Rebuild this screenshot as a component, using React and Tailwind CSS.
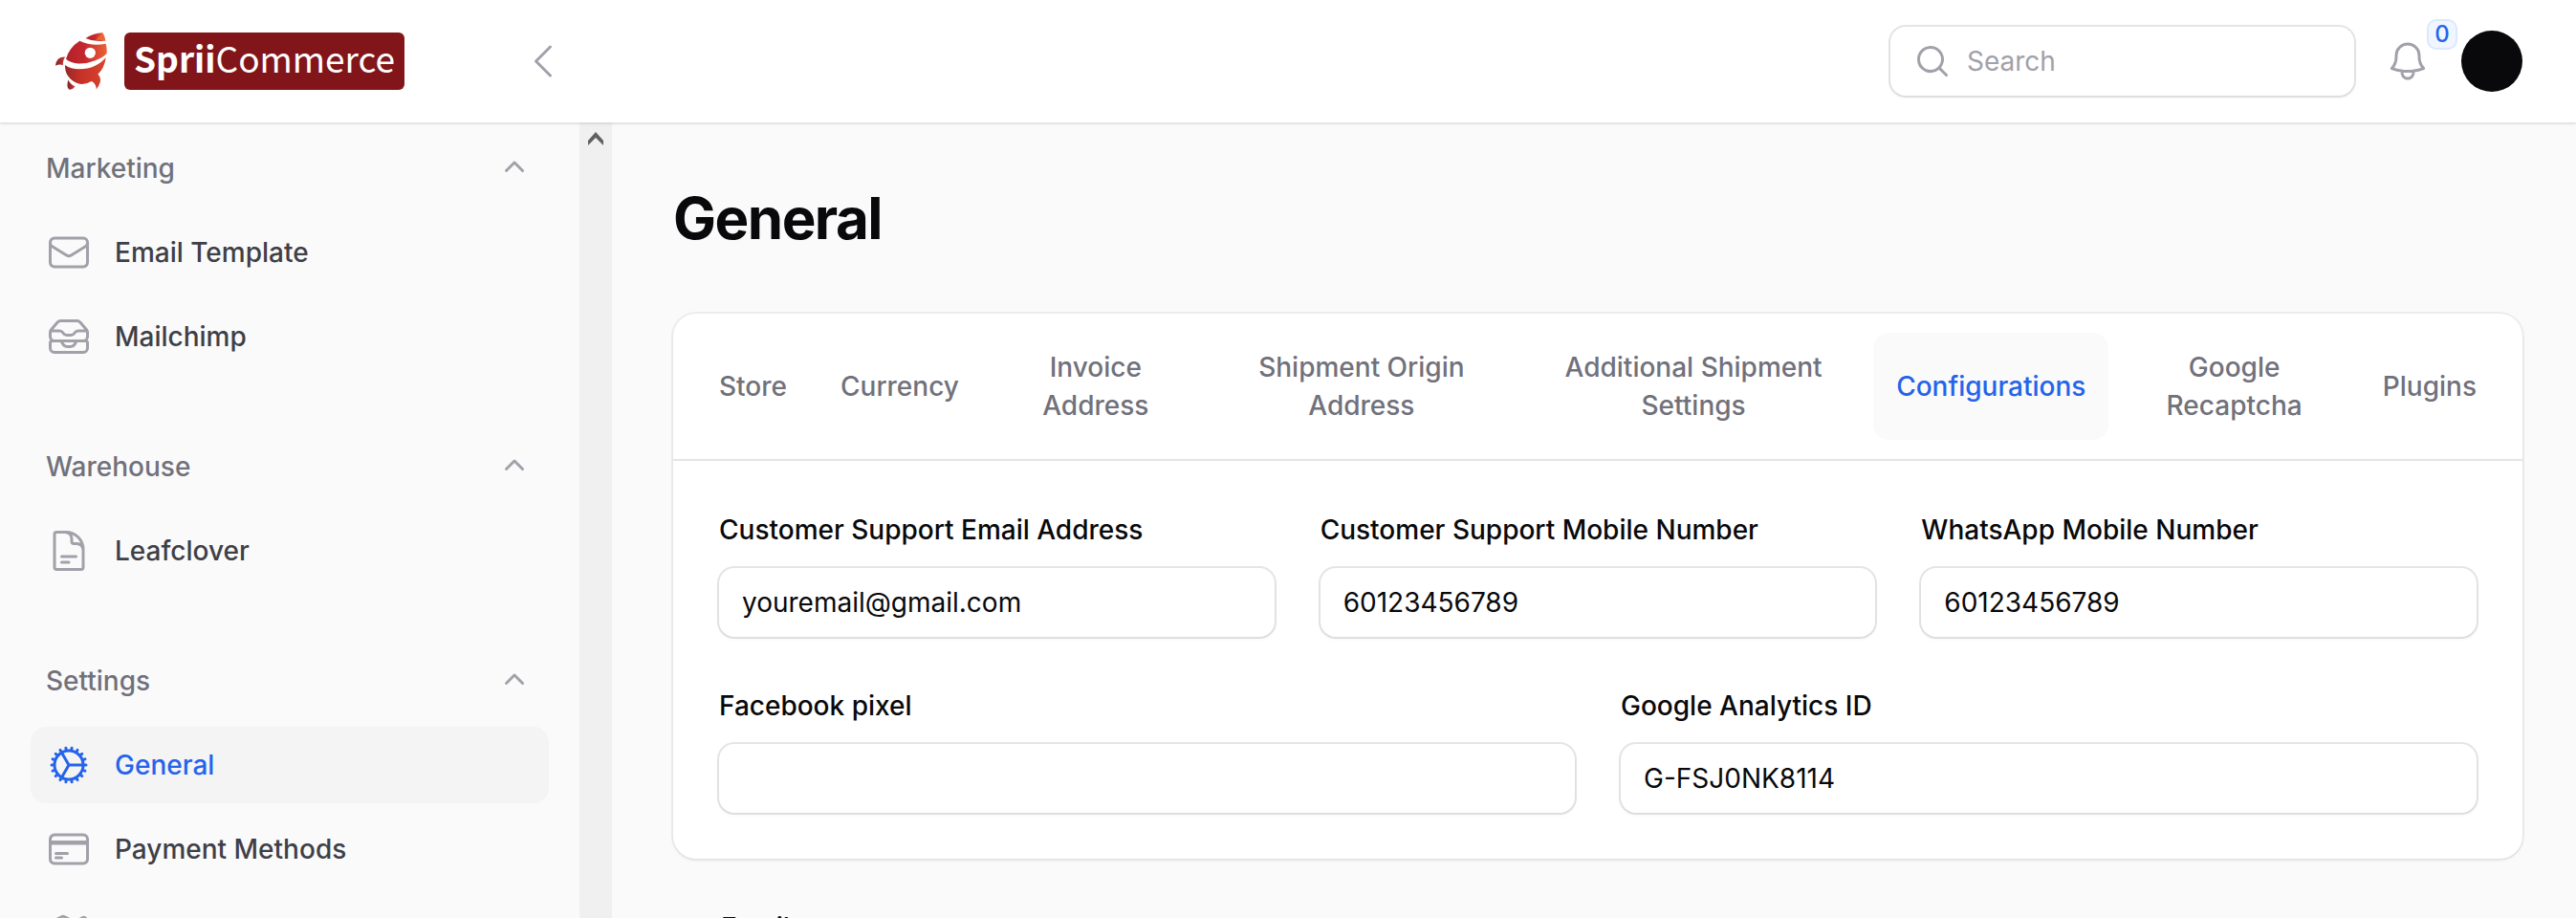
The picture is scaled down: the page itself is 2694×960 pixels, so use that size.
import { useState } from 'react';
import {
  HiMiniChevronUp,
  HiMiniMagnifyingGlass,
  HiOutlineBell,
  HiOutlineChevronLeft,
  HiOutlineCog,
  HiOutlineCreditCard,
  HiOutlineDocumentText,
  HiOutlineEnvelope,
  HiOutlineInboxStack,
  HiOutlineMap,
} from 'react-icons/hi2';

const NAVIGATION = [
  {
    label: 'Marketing',
    items: [
      { id: 'email-template', label: 'Email Template', icon: HiOutlineEnvelope },
      { id: 'mailchimp', label: 'Mailchimp', icon: HiOutlineInboxStack },
    ],
  },
  {
    label: 'Warehouse',
    items: [{ id: 'leafclover', label: 'Leafclover', icon: HiOutlineDocumentText }],
  },
  {
    label: 'Settings',
    items: [
      { id: 'general', label: 'General', icon: HiOutlineCog, active: true },
      { id: 'payment-methods', label: 'Payment Methods', icon: HiOutlineCreditCard },
      { id: 'map', icon: HiOutlineMap },
    ],
  },
];

const TABS = [
  'Store',
  'Currency',
  'Invoice Address',
  'Shipment Origin Address',
  'Additional Shipment Settings',
  'Configurations',
  'Google Recaptcha',
  'Plugins',
];

const FIELDS = [
  { id: 'support-email', label: 'Customer Support Email Address', value: 'youremail@gmail.com', span: 'col-span-2' },
  { id: 'support-mobile', label: 'Customer Support Mobile Number', value: '60123456789', span: 'col-span-2' },
  { id: 'whatsapp', label: 'WhatsApp Mobile Number', value: '60123456789', span: 'col-span-2' },
  { id: 'facebook-pixel', label: 'Facebook pixel', value: '', span: 'col-span-3' },
  { id: 'analytics-id', label: 'Google Analytics ID', value: 'G-FSJ0NK8114', span: 'col-span-3' },
];

function Rocket() {
  return (
    <svg viewBox="0 0 54 60" className="h-[60px] w-[54px]" aria-hidden="true">
      <defs>
        <linearGradient id="hull" x1="0" y1="0" x2="1" y2="0">
          <stop offset="0" stopColor="#b3202c" />
          <stop offset="0.45" stopColor="#c4282e" />
          <stop offset="1" stopColor="#ec6238" />
        </linearGradient>
        <linearGradient id="base" x1="0" y1="0" x2="1" y2="0">
          <stop offset="0" stopColor="#94282a" />
          <stop offset="0.35" stopColor="#c43026" />
          <stop offset="1" stopColor="#d9452f" />
        </linearGradient>
        <linearGradient id="fin" x1="0" y1="0" x2="1" y2="0">
          <stop offset="0" stopColor="#7c2228" />
          <stop offset="1" stopColor="#cf3a32" />
        </linearGradient>
      </defs>
      <path d="M31.500 6 Q39 1 49.300 0.300 Q51.500 4 52.300 8.500 Q41 10.500 31.500 6Z" fill="url(#hull)" />
      <path d="M42 7.500 L49.300 0.300 Q51.500 4 52.300 8.500Z" fill="#f06a3c" opacity="0.8" />
      <path
        d="M25.300 8.700 Q38 15 52.700 11.700 Q54.200 17 53.500 22 Q50 26 41 29.500 Q33 32.800 24 32.500 Q16 32 11 27.700 Q14 16 25.300 8.700Z"
        fill="url(#hull)"
      />
      <circle cx="36.300" cy="21.300" r="5.600" fill="#fff" />
      <path
        d="M10 34 Q16 38.300 25 38.300 Q34 38.300 41 35 Q49 31 52.700 26 Q51.500 37 44.500 43.500 Q48 48 46.700 52 Q45.500 56 42.700 59.500 Q42.500 53 37.700 51 Q30 55.500 22.700 53 Q9.500 47 10 34Z"
        fill="url(#base)"
      />
      <path d="M0 34.700 Q1 25 10.300 25.500 Q7.500 29 8 34 Q4 32.500 0 34.700Z" fill="url(#fin)" />
      <path d="M13.300 49.500 Q16 54.500 20.500 56.500 Q18 60 14.500 59.800 Q11 58 13.300 49.500Z" fill="url(#fin)" />
    </svg>
  );
}

function Logo() {
  return (
    <a href="#home" className="flex items-center gap-[18px]">
      <Rocket />
      <span className="flex h-[60px] items-center rounded-md bg-[#82151a] px-[10px] pb-2 font-['Noto_Sans_CJK_SC',sans-serif] text-[37px] leading-none text-white">
        <span className="font-bold">Sprii</span>
        <span>Commerce</span>
      </span>
    </a>
  );
}

function Topbar() {
  return (
    <header className="relative z-10 flex h-32 shrink-0 items-center justify-between bg-white pr-14 pl-[58px] shadow-[0_2px_4px_rgb(0_0_0/0.05)] ring-2 ring-zinc-950/5">
      <div className="flex w-[534px] items-center justify-between">
        <Logo />
        <button type="button" aria-label="Collapse sidebar" className="text-[#a1a1aa]">
          <HiOutlineChevronLeft className="size-12" />
        </button>
      </div>

      <div className="flex items-center gap-8">
        <label className="flex h-[72px] w-[485px] items-center gap-4 rounded-2xl bg-white px-6 text-[#a1a1aa] shadow-[0_2px_4px_rgb(0_0_0/0.05)] ring-2 ring-zinc-950/10">
          <HiMiniMagnifyingGlass className="size-10 shrink-0" />
          <input
            type="search"
            aria-label="Search"
            placeholder="Search"
            className="min-w-0 flex-1 text-[28px] leading-[48px] text-zinc-950 outline-none placeholder:text-[#a1a1aa]"
          />
        </label>
        <button type="button" aria-label="Notifications" className="relative text-[#a1a1aa]">
          <HiOutlineBell className="size-12" />
          <span className="absolute -top-[18px] left-[46px] flex h-7 w-7 items-center justify-center rounded-lg bg-[#eff6ff] text-2xl font-medium text-[#2563eb] ring-2 ring-[#dbe8fe]">
            0
          </span>
        </button>
        <button type="button" aria-label="User menu" className="size-16 rounded-full bg-zinc-950" />
      </div>
    </header>
  );
}

function NavItem({ item }) {
  const Icon = item.icon;
  return (
    <li>
      <a
        href={`#${item.id}`}
        aria-label={item.label ?? item.id}
        className={`flex items-center gap-6 rounded-2xl p-4 text-[28px] leading-[48px] font-medium ${
          item.active ? 'bg-zinc-100 text-[#2563eb]' : 'text-zinc-700'
        }`}
      >
        <Icon className={`size-12 shrink-0 ${item.active ? 'text-[#2563eb]' : 'text-[#a1a1aa]'}`} />
        {item.label}
      </a>
    </li>
  );
}

function Sidebar() {
  return (
    <aside className="flex w-[640px] shrink-0 overflow-hidden">
      <nav className="flex flex-1 flex-col gap-14 px-8 pt-2">
        {NAVIGATION.map((group) => (
          <div key={group.label} className="flex flex-col gap-2">
            <button
              type="button"
              className="flex items-center justify-between p-4 text-[28px] leading-[48px] font-medium text-zinc-500"
            >
              {group.label}
              <HiMiniChevronUp className="size-10 text-[#a1a1aa]" />
            </button>
            <ul className="flex flex-col gap-2">
              {group.items.map((item) => (
                <NavItem key={item.id} item={item} />
              ))}
            </ul>
          </div>
        ))}
      </nav>
      <div className="flex w-[34px] justify-center bg-[#f0f0f0] pt-2.5">
        <svg viewBox="0 0 16 14" className="h-[14px] w-4" aria-hidden="true">
          <path d="M0 9 L8 0 L16 9 V14 L8 6 L0 14Z" fill="#606060" />
        </svg>
      </div>
    </aside>
  );
}

function Field({ field }) {
  return (
    <div className={`flex flex-col gap-4 ${field.span}`}>
      <label htmlFor={field.id} className="text-[28px] leading-[48px] font-medium">
        {field.label}
      </label>
      <input
        id={field.id}
        type="text"
        defaultValue={field.value}
        className="h-[72px] w-full rounded-2xl bg-white px-6 text-[28px] leading-[48px] shadow-[0_2px_4px_rgb(0_0_0/0.05)] ring-2 ring-zinc-950/10 outline-none"
      />
    </div>
  );
}

export default function App() {
  const [activeTab, setActiveTab] = useState('Configurations');

  return (
    <div className="flex h-screen flex-col overflow-hidden bg-zinc-50 font-['Inter',sans-serif] text-zinc-950">
      <Topbar />
      <div className="flex min-h-0 flex-1">
        <Sidebar />
        <main className="flex min-w-0 flex-1 flex-col overflow-hidden py-16 pr-14 pl-16">
          <h1 className="text-6xl leading-[72px] font-bold tracking-tight">General</h1>

          <section className="mt-16 mb-12 shrink-0 rounded-3xl bg-white shadow-[0_2px_4px_rgb(0_0_0/0.05)] ring-2 ring-zinc-950/5">
            <div role="tablist" className="flex gap-2 border-b-2 border-zinc-200 px-6 py-5">
              {TABS.map((tab) => (
                <button
                  key={tab}
                  type="button"
                  role="tab"
                  aria-selected={tab === activeTab}
                  onClick={() => setActiveTab(tab)}
                  className={`rounded-2xl px-6 py-4 text-[28px] leading-10 font-medium ${
                    tab === activeTab ? 'bg-zinc-50 text-[#2563eb]' : 'text-zinc-500'
                  }`}
                >
                  {tab}
                </button>
              ))}
            </div>
            <form className="grid grid-cols-6 gap-12 p-12">
              {FIELDS.map((field) => (
                <Field key={field.id} field={field} />
              ))}
            </form>
          </section>

          <h2 className="px-[50px] text-[28px] leading-[48px] font-medium">Email</h2>
        </main>
      </div>
    </div>
  );
}
